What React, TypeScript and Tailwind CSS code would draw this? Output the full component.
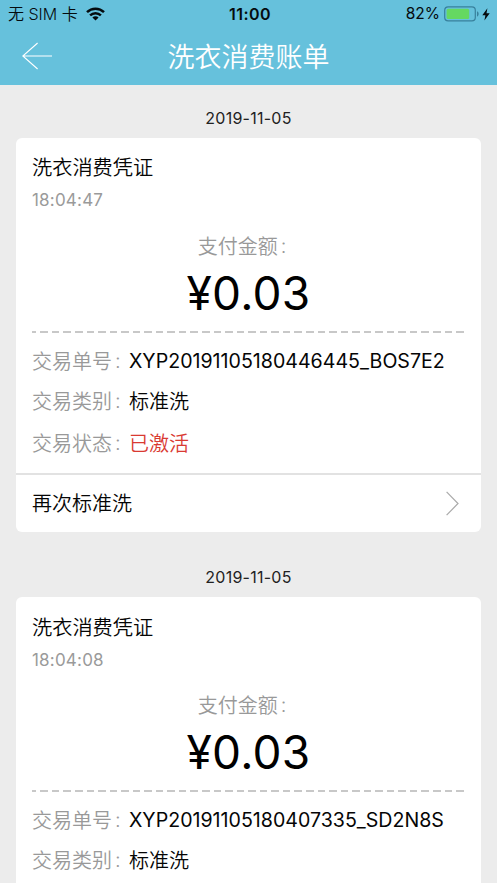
import React from 'react';

interface Bill {
  date: string;
  title: string;
  time: string;
  amount: string;
  orderNo: string;
  category: string;
  status: string;
}

const bills: Bill[] = [
  {
    date: '2019-11-05',
    title: '洗衣消费凭证',
    time: '18:04:47',
    amount: '¥0.03',
    orderNo: 'XYP20191105180446445_BOS7E2',
    category: '标准洗',
    status: '已激活',
  },
  {
    date: '2019-11-05',
    title: '洗衣消费凭证',
    time: '18:04:08',
    amount: '¥0.03',
    orderNo: 'XYP20191105180407335_SD2N8S',
    category: '标准洗',
    status: '已激活',
  },
];

const WifiIcon: React.FC = () => (
  <svg width="19" height="14" viewBox="0 0 19 14" fill="none" stroke="#050b0e" strokeWidth="2.5">
    <path d="M1 5.1a12.2 12.2 0 0 1 17 0" />
    <path d="M4.1 8.4a7.8 7.8 0 0 1 10.8 0" />
    <path d="M9.5 13.6 6.4 10.5a4.4 4.4 0 0 1 6.2 0Z" fill="#050b0e" stroke="none" />
  </svg>
);

const BatteryIcon: React.FC = () => (
  <svg width="36" height="16" viewBox="0 0 36 16" fill="none">
    <rect x="0.7" y="0.9" width="30.6" height="14" rx="3.4" stroke="#38809c" strokeWidth="1.2" />
    <rect x="2.6" y="2.8" width="22.6" height="10.2" rx="1.6" fill="#65d861" />
    <path d="M33 5.2c2.2.8 2.2 4.6 0 5.4Z" fill="#38809c" />
  </svg>
);

const BoltIcon: React.FC = () => (
  <svg width="8" height="13" viewBox="0 0 8 13">
    <path d="M5.4 0.2 0.3 7.2h3.1L2.4 12.6 7.7 5.3H4.5Z" fill="#050b0e" />
  </svg>
);

const StatusBar: React.FC = () => (
  <div className="grid h-7 grid-cols-3 items-center pr-[7px] pl-2 text-[#050b0e]">
    <div className="flex items-center">
      <span className="text-[16px] font-[350] whitespace-nowrap">无 SIM 卡</span>
      <span className="ml-2">
        <WifiIcon />
      </span>
    </div>
    <span className="pl-0.5 text-center text-[16px] font-semibold tracking-[0.4px]">11:00</span>
    <div className="flex items-center justify-end">
      <span className="text-[15.5px]">82%</span>
      <span className="ml-1">
        <BatteryIcon />
      </span>
      <span className="ml-0.5">
        <BoltIcon />
      </span>
    </div>
  </div>
);

const NavBar: React.FC = () => (
  <div className="grid h-14 grid-cols-[1fr_auto_1fr] items-center px-[22px]">
    <svg width="31" height="28" viewBox="0 0 31 28" fill="none" stroke="#fff" strokeWidth="1.1">
      <path d="M30 14H0.8M15.6 1 0.8 14l14.8 13" />
    </svg>
    <h1 className="pt-0.5 text-[27px] leading-none font-[350] text-white">洗衣消费账单</h1>
  </div>
);

const Label: React.FC<{ text: string }> = ({ text }) => (
  <span className="flex whitespace-nowrap text-[#999]">
    {text}
    <span className="-mt-px ml-[3px]">:</span>
  </span>
);

const DetailRow: React.FC<{ label: string; children: React.ReactNode }> = ({ label, children }) => (
  <div className="flex h-10 items-center">
    <div className="w-[97px] shrink-0">
      <Label text={label} />
    </div>
    {children}
  </div>
);

const BillCard: React.FC<{ bill: Bill }> = ({ bill }) => (
  <section className="mb-[25.4px]">
    <p className="flex h-10 items-center justify-center text-[16px] tracking-[0.25px] text-[#222]">{bill.date}</p>
    <div className="h-[394px] rounded-md bg-white text-[20px] font-[350] text-[#050505]">
      <div className="h-[334.5px] px-4 pt-[14px]">
        <h2 className="flex h-[33px] items-center text-[20.2px]">{bill.title}</h2>
        <p className="flex h-8 items-center text-[17px] font-normal tracking-[0.2px] text-[#9a9a9a]">{bill.time}</p>
        <div className="mt-4 flex h-7 items-center justify-center pr-[13px]">
          <Label text="支付金额" />
        </div>
        <p className="flex h-16 items-center justify-center text-[46px] font-[380] tracking-[0.3px] text-black">
          {bill.amount}
        </p>
        <div className="mt-1.5 mb-[9px] h-[1.5px] bg-[repeating-linear-gradient(90deg,#c8c8c8_0_4.3px,transparent_4.3px_8.3px,#c8c8c8_8.3px_11.55px)]" />
        <DetailRow label="交易单号">
          <span className="text-[19.6px] font-normal">{bill.orderNo}</span>
        </DetailRow>
        <DetailRow label="交易类别">{bill.category}</DetailRow>
        <div className="pt-0.5">
          <DetailRow label="交易状态">
            <span className="text-[#d93a32]">{bill.status}</span>
          </DetailRow>
        </div>
      </div>
      <button className="flex h-[59.5px] w-full items-center justify-between border-t-2 border-[#e2e2e2] pr-[22px] pl-4">
        <span className="pt-0.5">再次标准洗</span>
        <svg width="13" height="25" viewBox="0 0 13 25" fill="none" stroke="#aaa" strokeWidth="1.2">
          <path d="M0.6 0.8 12 12.5 0.6 24.2" />
        </svg>
      </button>
    </div>
  </section>
);

const App: React.FC = () => {
  return (
    <div className="h-[883px] overflow-hidden bg-[#ececec] font-['Inter','Noto_Sans_CJK_SC',sans-serif]">
      <header className="h-[85px] bg-[#66c1dc]">
        <StatusBar />
        <NavBar />
      </header>
      <main className="px-4 pt-[13px]">
        {bills.map((bill) => (
          <BillCard key={bill.orderNo} bill={bill} />
        ))}
      </main>
    </div>
  );
};

export default App;
